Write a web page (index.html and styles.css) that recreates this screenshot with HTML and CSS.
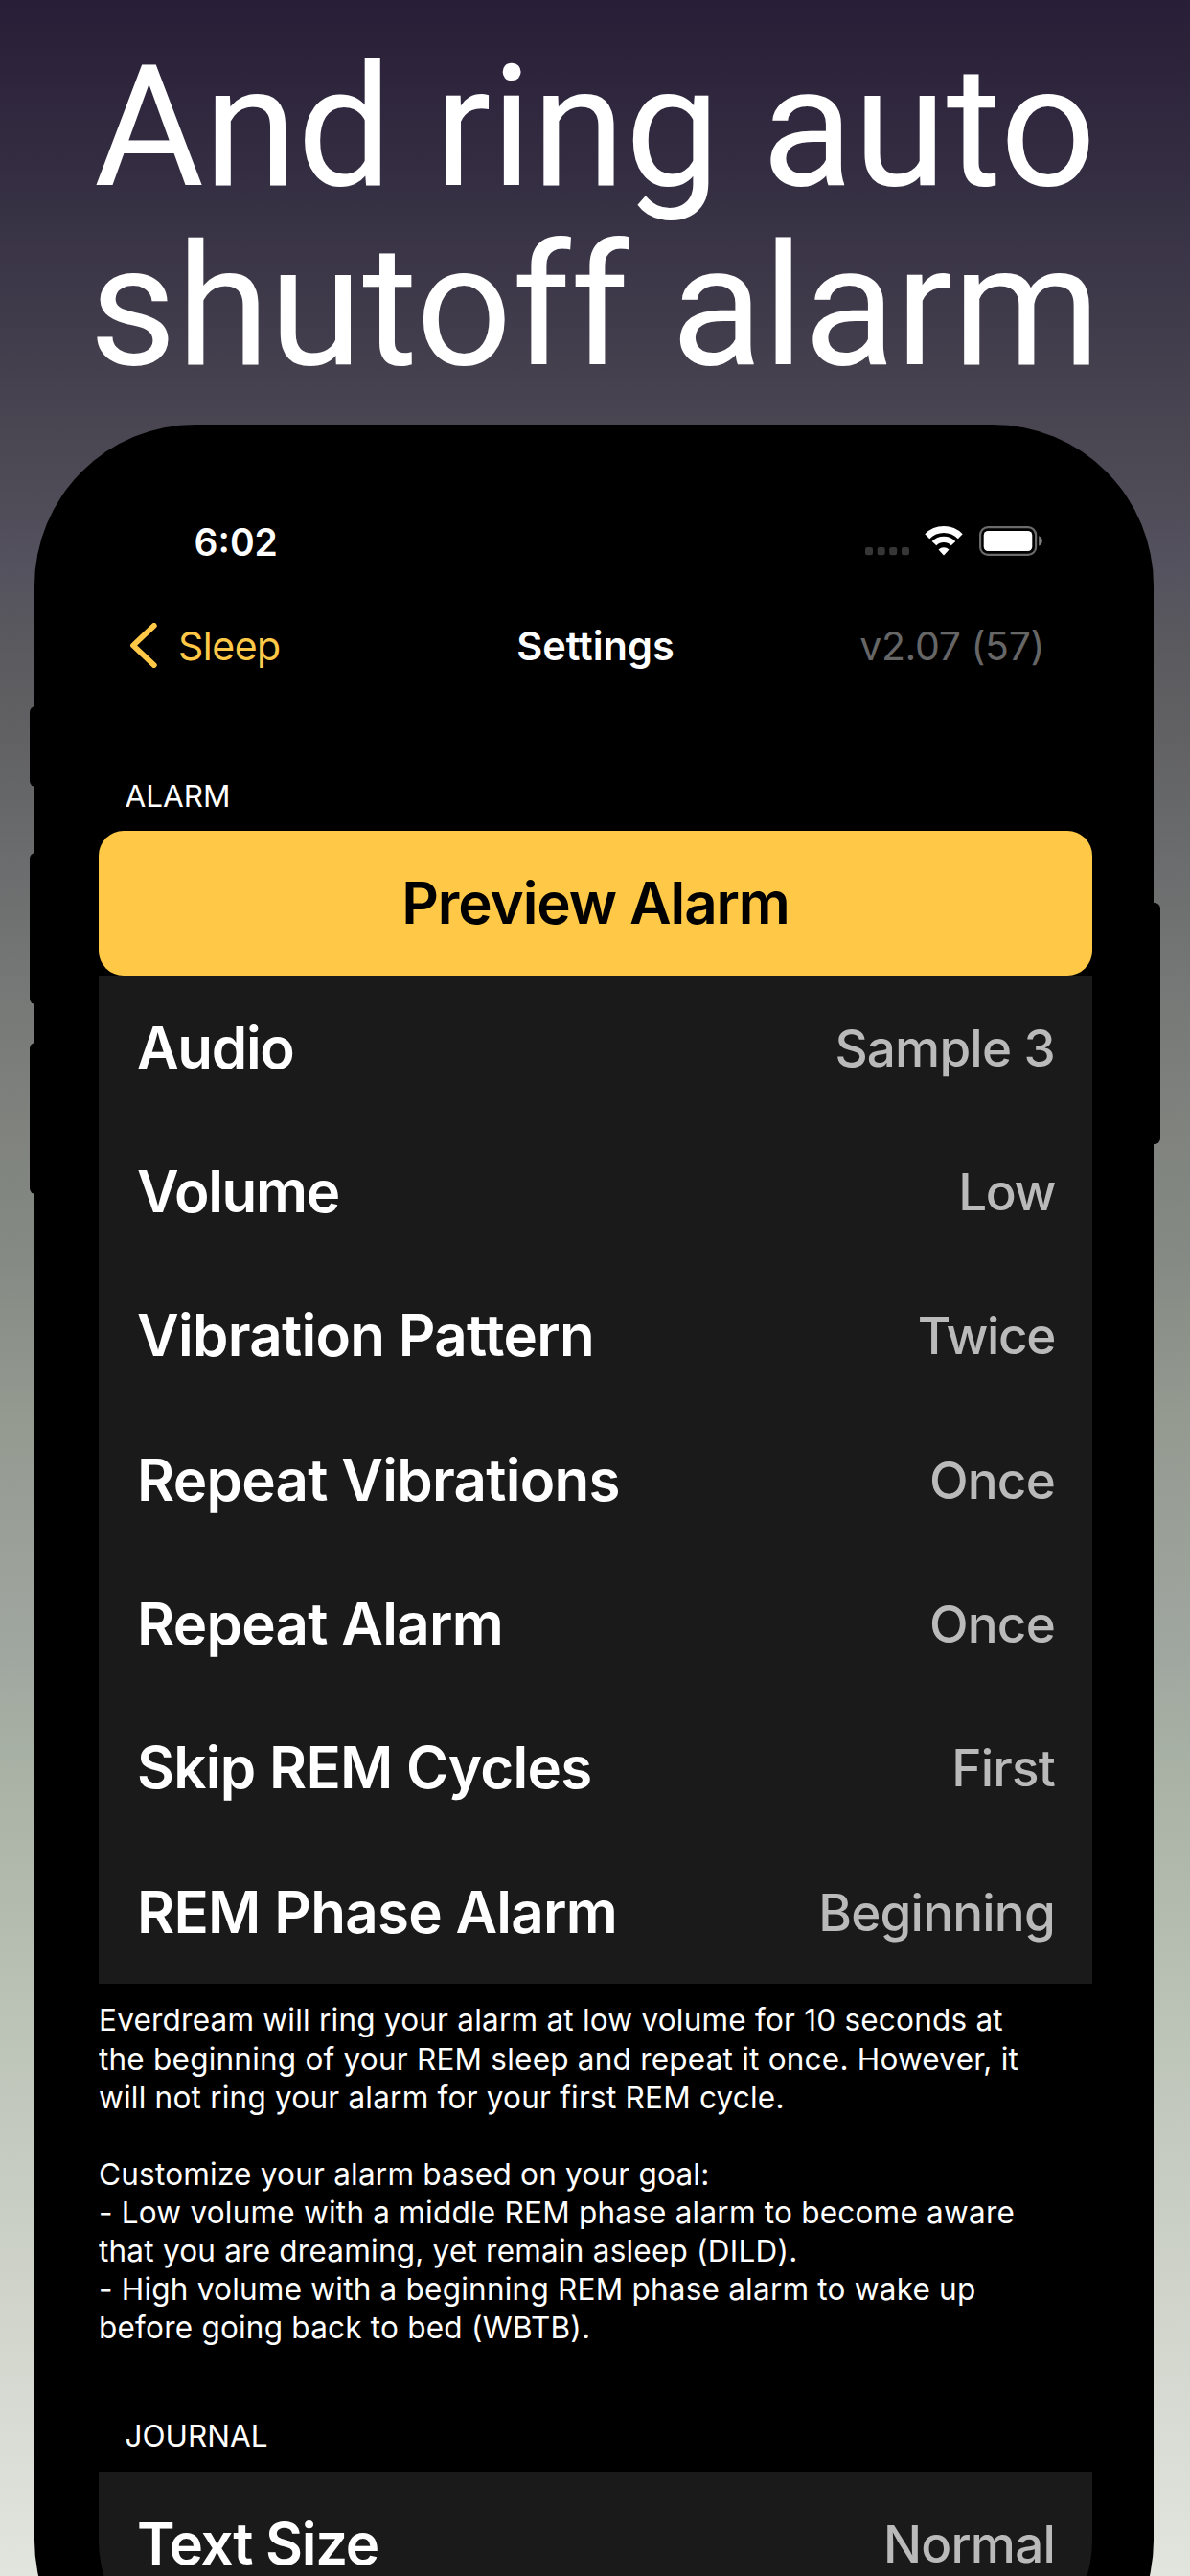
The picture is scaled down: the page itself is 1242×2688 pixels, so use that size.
FILE: index.html
```
<!DOCTYPE html>
<html lang="en">
<head>
    <meta charset="UTF-8">
    <meta name="viewport" content="width=device-width, initial-scale=1.0">
    <title>Settings</title>
    <link rel="stylesheet" href="styles.css">
</head>
<body>
    <h1 class="headline">And ring auto<br>shutoff alarm</h1>

    <div class="phone">
        <span class="side-button mute"></span>
        <span class="side-button volume-up"></span>
        <span class="side-button volume-down"></span>
        <span class="side-button power"></span>

        <div class="screen">
            <div class="status-bar">
                <span class="time">6:02</span>
                <div class="status-icons">
                    <svg width="46" height="31" viewBox="0 0 46 31" fill="#363636">
                        <rect x="0" y="22" width="8" height="8.3" rx="2.2"/>
                        <rect x="12.7" y="22" width="8" height="8.3" rx="2.2"/>
                        <rect x="25.2" y="22" width="8" height="8.3" rx="2.2"/>
                        <rect x="38" y="22" width="8" height="8.3" rx="2.2"/>
                    </svg>
                    <svg width="40" height="31" viewBox="0 0 40 31" fill="none" stroke="#fff">
                        <path d="M2.75 10.75A24.4 24.4 0 0 1 37.25 10.75" stroke-width="7"/>
                        <path d="M10 18.1A13.9 13.9 0 0 1 30 18.1" stroke-width="6.4"/>
                        <path d="M14.5 24.4A8 8 0 0 1 25.5 24.4L20.5 30Q20 30.6 19.5 30Z" fill="#fff" stroke="none"/>
                    </svg>
                    <svg width="66" height="31" viewBox="0 0 66 31">
                        <rect x="1.1" y="1.1" width="58" height="28.8" rx="8" fill="none" stroke="#6b6b6b" stroke-width="2.2"/>
                        <rect x="4.7" y="5" width="50.6" height="21" rx="4.5" fill="#fff"/>
                        <path d="M62.2 10.2Q65.8 11.8 65.8 15.5T62.2 20.8Z" fill="#808080"/>
                    </svg>
                </div>
            </div>

            <div class="nav-bar">
                <a class="back">
                    <svg width="28" height="47" viewBox="0 0 28 47" fill="none" stroke="#ffc847" stroke-width="5.8" stroke-linecap="round" stroke-linejoin="round">
                        <path d="M24.8 2.9L3 23.5L24.8 44.1"/>
                    </svg>
                    <span>Sleep</span>
                </a>
                <span class="title">Settings</span>
                <span class="version">v2.07 (57)</span>
            </div>

            <div class="section">
                <h2 class="section-title">ALARM</h2>
                <button class="preview">Preview Alarm</button>
                <div class="row"><span class="label tight">Audio</span><span class="value">Sample 3</span></div>
                <div class="row"><span class="label tight">Volume</span><span class="value tight">Low</span></div>
                <div class="row"><span class="label">Vibration Pattern</span><span class="value tight">Twice</span></div>
                <div class="row"><span class="label">Repeat Vibrations</span><span class="value">Once</span></div>
                <div class="row"><span class="label">Repeat Alarm</span><span class="value">Once</span></div>
                <div class="row"><span class="label">Skip REM Cycles</span><span class="value">First</span></div>
                <div class="row"><span class="label">REM Phase Alarm</span><span class="value">Beginning</span></div>
                <div class="note">
                    <p>Everdream will ring your alarm at low volume for 10 seconds at<br>the beginning of your REM sleep and repeat it once. However, it<br>will not ring your alarm for your first REM cycle.</p>
                    <p>Customize your alarm based on your goal:<br>- Low volume with a middle REM phase alarm to become aware<br>that you are dreaming, yet remain asleep (DILD).<br>- High volume with a beginning REM phase alarm to wake up<br>before going back to bed (WBTB).</p>
                </div>
            </div>

            <div class="section journal">
                <h2 class="section-title">JOURNAL</h2>
                <div class="row"><span class="label tight">Text Size</span><span class="value">Normal</span></div>
            </div>
        </div>
    </div>
</body>
</html>
```
FILE: styles.css
```
* {
    box-sizing: border-box;
    margin: 0;
    padding: 0;
}

body {
    width: 1242px;
    height: 2688px;
    overflow: hidden;
    font-family: Inter, "Liberation Sans", sans-serif;
    color: #fff;
    background: linear-gradient(
        to bottom,
        #281e37 0,
        #383245 230px,
        #494551 443px,
        #54525e 590px,
        #5b5a5e 680px,
        #68696b 860px,
        #757876 1029px,
        #80837e 1190px,
        #848a83 1303px,
        #949a90 1480px,
        #a0a7a0 1730px,
        #a9b2a5 1852px,
        #bec5b9 2143px,
        #d0d4cb 2400px,
        #e2e5de 2688px
    );
}

.headline {
    height: 443px;
    padding-top: 40px;
    font-family: Roboto, sans-serif;
    font-size: 176px;
    font-weight: 400;
    line-height: 187.3px;
    text-align: center;
}

.phone {
    position: relative;
    width: 1168px;
    height: 2376px;
    margin-left: 36px;
    padding: 0 64px 43px 67px;
    background: #000;
    border-radius: 168px;
}

.side-button {
    position: absolute;
    left: -5px;
    width: 12px;
    background: #000;
    border-radius: 6px;
}

.mute {
    top: 294px;
    height: 84px;
}

.volume-up {
    top: 447px;
    height: 158px;
}

.volume-down {
    top: 645px;
    height: 158px;
}

.power {
    top: 499px;
    left: auto;
    right: -7px;
    width: 14px;
    height: 252px;
}

.screen {
    height: 2333px;
    padding-top: 87px;
    overflow: hidden;
    border-radius: 0 0 125px 125px;
}

.status-bar {
    display: flex;
    justify-content: space-between;
    align-items: center;
    height: 71px;
    padding: 0 52.5px 0 99.5px;
}

.time {
    font-size: 39px;
    font-weight: 600;
}

.status-icons {
    display: flex;
    margin-top: -2px;
}

.status-icons svg + svg {
    margin-left: 16px;
}

.status-icons svg:last-child {
    margin-left: 17px;
}

.nav-bar {
    display: grid;
    grid-template-columns: 1fr auto 1fr;
    align-items: center;
    height: 100px;
    margin-top: 22.6px;
    padding: 0 50px 0 33px;
    font-size: 41px;
}

.back {
    display: flex;
    align-items: center;
    gap: 22px;
    color: #ffc847;
    letter-spacing: -0.5px;
}

.title {
    font-size: 41.5px;
    font-weight: 600;
    margin-left: 17px;
}

.version {
    color: #666;
    text-align: right;
    letter-spacing: -0.4px;
}

.section {
    margin-top: 87.2px;
}

.journal {
    margin-top: 73.1px;
}

.section-title {
    height: 56.5px;
    padding-left: 27.5px;
    font-size: 31.5px;
    font-weight: 400;
    line-height: 40px;
}

.preview {
    display: block;
    width: 100%;
    height: 150.3px;
    border: none;
    border-radius: 26px;
    background: #ffc847;
    color: #000;
    font-family: inherit;
    font-size: 60px;
    font-weight: 600;
    letter-spacing: -1.1px;
}

.row {
    display: flex;
    justify-content: space-between;
    align-items: center;
    height: 150.3px;
    padding: 0 39px 0 40px;
    background: #1a1a1a;
}

.label {
    font-size: 60px;
    font-weight: 600;
    letter-spacing: -0.7px;
}

.label.tight {
    letter-spacing: -1.3px;
}

.value {
    margin-top: 2px;
    color: #bababa;
    font-size: 53px;
    font-weight: 450;
    letter-spacing: -0.8px;
}

.value.tight {
    letter-spacing: -1.4px;
}

.note {
    padding-top: 18.8px;
    font-size: 31.5px;
    line-height: 40.1px;
    letter-spacing: 0.22px;
    white-space: nowrap;
}

.note p + p {
    margin-top: 40.1px;
}
```
